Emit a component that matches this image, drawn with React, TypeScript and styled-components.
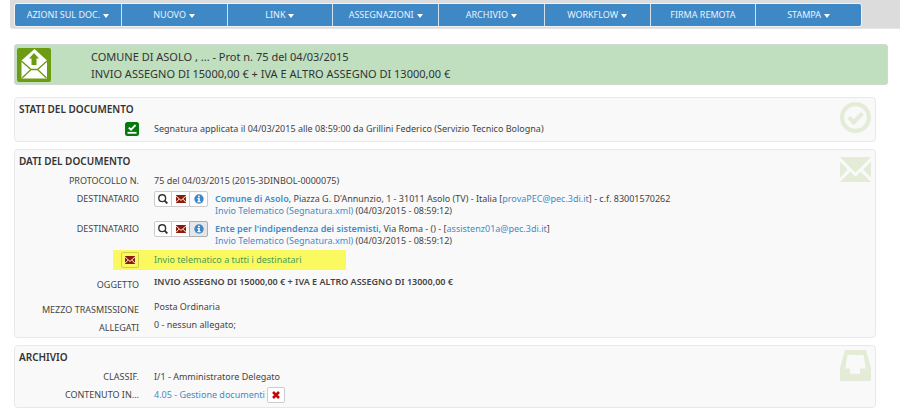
import React from "react";
import styled, { createGlobalStyle, css } from "styled-components";

const Global = createGlobalStyle`
  *, *::before, *::after { box-sizing: border-box; }
  body {
    margin: 0;
    background: #fff;
    color: #444;
    font: 9px/12px "Noto Sans", "Open Sans", sans-serif;
  }
`;

const Toolbar = styled.header`
  margin-left: 10px;
  padding: 3px 38px 1px 4px;
  background: #dcdcdc;
  border-bottom: 1px solid #e6e6e6;
  border-bottom-left-radius: 3px;
`;

const Menu = styled.nav`
  display: grid;
  grid-template-columns: repeat(8, 1fr);
  border: 1px solid #f0f1f2;
  border-radius: 3px;
  overflow: hidden;
`;

const MenuButton = styled.button`
  display: flex;
  align-items: center;
  justify-content: center;
  gap: 3px;
  height: 22px;
  padding: 0;
  border: 0;
  background: #3f88c6;
  color: #eaf3fb;
  font: inherit;
  cursor: pointer;

  & + & {
    border-left: 1px solid #d5e2ee;
  }
`;

const Caret = styled.span`
  margin-top: 2px;
  border: 3px solid transparent;
  border-top: 4px solid #fff;
  border-bottom: 0;
`;

const Banner = styled.section`
  display: flex;
  align-items: center;
  gap: 40px;
  margin: 15px 12px 12px 14px;
  padding: 3px 2px 2px;
  border: 1px solid #d0d8cf;
  border-radius: 3px;
  background: #bfdfbf;
`;

const BannerTitle = styled.h1`
  margin: 0;
  color: #333;
  font-size: 11px;
  line-height: 17px;
  font-weight: 400;
`;

const Panels = styled.main`
  display: flex;
  flex-direction: column;
  gap: 7px;
  margin: 0 24px 6px 14px;
`;

const Panel = styled.section`
  position: relative;
  padding: 3px 4px;
  border: 1px solid #e8e8e8;
  border-radius: 4px;
  background: #f9f9f9;
`;

const PanelTitle = styled.h2`
  margin: 0 0 2px;
  color: #333;
  font-size: 10px;
  line-height: 17px;
  font-weight: 600;
`;

const Watermark = styled.div`
  position: absolute;
  top: 4px;
  right: 4px;
  width: 31px;
  height: 31px;
  color: #e4ecd8;

  svg { display: block; width: 100%; height: 100%; }
`;

const Row = styled.div<{ $space?: number }>`
  display: grid;
  grid-template-columns: 120px 1fr;
  gap: 15px;
  min-height: 18px;
  margin-top: ${(p) => p.$space ?? 0}px;
`;

const Label = styled.div<{ $low?: boolean }>`
  padding-top: ${(p) => (p.$low ? 6 : 3)}px;
  text-align: right;
  white-space: nowrap;
`;

const Value = styled.div<{ $strong?: boolean }>`
  padding-top: 3px;
  font-weight: ${(p) => (p.$strong ? 600 : 400)};
`;

const Recipient = styled.div`
  display: flex;
  gap: 7px;
  min-height: 30px;
`;

const Lines = styled.div`
  padding-top: 3px;
`;

const Link = styled.a<{ $strong?: boolean }>`
  color: #428bca;
  font-weight: ${(p) => (p.$strong ? 600 : 400)};
  text-decoration: none;
`;

const Group = styled.div`
  display: flex;
  align-self: flex-start;
  margin-top: 1px;
`;

const IconButton = styled.button<{ $tone?: "pressed" | "marked" }>`
  display: flex;
  align-items: center;
  justify-content: center;
  width: 18px;
  height: 16px;
  padding: 0;
  border: 1px solid #ccc;
  border-radius: 2px;
  background: #fff;
  color: #333;
  cursor: pointer;

  ${(p) => p.$tone === "pressed" && css`background: #e6e6e6; border-color: #adadad;`}
  ${(p) => p.$tone === "marked" && css`background: #fafa5c; border-color: #cfcf4c;`}

  ${Group} &:not(:first-child) { margin-left: -1px; border-top-left-radius: 0; border-bottom-left-radius: 0; width: 19px; }
  ${Group} &:not(:last-child) { border-top-right-radius: 0; border-bottom-right-radius: 0; }
`;

const Highlight = styled.div`
  display: flex;
  align-items: center;
  gap: 15px;
  width: fit-content;
  margin-left: 94px;
  padding: 2px 44px 2px 8px;
  background: #fafa60;

  a { color: #4c9a52; }
`;

const Inline = styled.div`
  display: flex;
  align-items: center;
  gap: 2px;
`;

const StatusMark = styled.div`
  display: flex;
  justify-content: flex-end;
  align-items: flex-start;
  padding-top: 2px;
`;

function OutgoingIcon() {
  return (
    <svg width="34" height="34" viewBox="0 0 34 34" aria-hidden="true">
      <rect width="34" height="34" rx="2" fill="#6b9c12" />
      <path d="M4.5 12.5 17.5 1 30 12.5V30.5H4.5Z" fill="#fff" />
      <path d="M4.5 13 14 21.5H20.5L30 13M5 30 14 21.5M29.5 30 20.5 21.5" fill="none" stroke="#6b9c12" strokeWidth="1.3" />
      <path d="M17 5 22 10.5H19.5V17H14.5V10.5H12Z" fill="#6b9c12" />
    </svg>
  );
}

function SignedIcon() {
  return (
    <svg width="14" height="14" viewBox="0 0 14 14" role="img" aria-label="Segnatura applicata">
      <rect width="14" height="14" rx="2.5" fill="#047a0c" />
      <path d="M3.8 5.6 6 7.7 10.6 3" fill="none" stroke="#fff" strokeWidth="1.8" />
      <path d="M2.5 10.8H11.5" stroke="#fff" strokeWidth="1.8" />
    </svg>
  );
}

function SearchIcon() {
  return (
    <svg width="10" height="10" viewBox="0 0 10 10" aria-hidden="true">
      <circle cx="4.2" cy="4.2" r="3.4" fill="none" stroke="#333" strokeWidth="1.4" />
      <path d="M6.6 6.6 9.4 9.4" stroke="#333" strokeWidth="1.9" />
    </svg>
  );
}

function MailIcon() {
  return (
    <svg width="10" height="8" viewBox="0 0 31 25" aria-hidden="true">
      <rect width="31" height="25" fill="#8c1c08" />
      <path d="M0 3 15.5 17 31 3M0 23 9 13M31 23 22 13" fill="none" stroke="#fff" strokeWidth="3" />
    </svg>
  );
}

function InfoIcon() {
  return (
    <svg width="10" height="10" viewBox="0 0 10 10" aria-hidden="true">
      <circle cx="5" cy="5" r="4.7" fill="#3f88c6" />
      <path d="M4 1.8H5.8V3.2H4ZM3.4 4H5.8V7H6.6V8.2H3.4V7H4.2V5H3.4Z" fill="#fff" />
    </svg>
  );
}

function RemoveIcon() {
  return (
    <svg width="8" height="8" viewBox="0 0 8 8" aria-hidden="true">
      <path d="M1 1 7 7M7 1 1 7" stroke="#c4060c" strokeWidth="2.6" />
    </svg>
  );
}

function CheckMark() {
  return (
    <svg viewBox="0 0 31 31" aria-hidden="true">
      <circle cx="15.5" cy="15.5" r="13.4" fill="none" stroke="currentColor" strokeWidth="4.2" />
      <path d="M8.8 15.2 13.8 20.2 22.4 11.4" fill="none" stroke="currentColor" strokeWidth="4.2" />
    </svg>
  );
}

function MailMark() {
  return (
    <svg viewBox="0 0 31 31" aria-hidden="true">
      <path d="M0 3H31L15.5 18.5ZM0 7.8 7.8 15.5 0 23.5ZM31 7.8 23.2 15.5 31 23.5ZM0 28 10.3 17.8 15.5 22.8 20.7 17.8 31 28Z" fill="currentColor" />
    </svg>
  );
}

function TrayMark() {
  return (
    <svg viewBox="0 0 31 31" aria-hidden="true">
      <path fillRule="evenodd" d="M5 0H26L31 18V31H0V18ZM7.5 5 5.2 18.5H10V23.8H20V18.5H25.8L23.5 5Z" fill="currentColor" />
    </svg>
  );
}

const MENU = [
  { text: "AZIONI SUL DOC.", opens: true },
  { text: "NUOVO", opens: true },
  { text: "LINK", opens: true },
  { text: "ASSEGNAZIONI", opens: true },
  { text: "ARCHIVIO", opens: true },
  { text: "WORKFLOW", opens: true },
  { text: "FIRMA REMOTA", opens: false },
  { text: "STAMPA", opens: true },
];

const RECIPIENTS = [
  { name: "Comune di Asolo", address: "Piazza G. D'Annunzio, 1 - 31011 Asolo (TV) - Italia", mail: "provaPEC@pec.3di.it", tail: " - c.f. 83001570262", open: false },
  { name: "Ente per l'indipendenza dei sistemisti", address: "Via Roma - () -", mail: "assistenz01a@pec.3di.it", tail: "", open: true },
];

export default function App() {
  return (
    <>
      <Global />
      <Toolbar>
        <Menu>
          {MENU.map((m) => (
            <MenuButton key={m.text} type="button" aria-haspopup={m.opens ? "menu" : undefined}>
              {m.text}
              {m.opens && <Caret />}
            </MenuButton>
          ))}
        </Menu>
      </Toolbar>

      <Banner>
        <OutgoingIcon />
        <BannerTitle>
          COMUNE DI ASOLO , ... - Prot n. 75 del 04/03/2015
          <br />
          INVIO ASSEGNO DI 15000,00 € + IVA E ALTRO ASSEGNO DI 13000,00 €
        </BannerTitle>
      </Banner>

      <Panels>
        <Panel>
          <PanelTitle>STATI DEL DOCUMENTO</PanelTitle>
          <Row>
            <StatusMark><SignedIcon /></StatusMark>
            <Value>Segnatura applicata il 04/03/2015 alle 08:59:00 da Grillini Federico (Servizio Tecnico Bologna)</Value>
          </Row>
          <Watermark><CheckMark /></Watermark>
        </Panel>

        <Panel>
          <PanelTitle>DATI DEL DOCUMENTO</PanelTitle>
          <Row>
            <Label>PROTOCOLLO N.</Label>
            <Value>75 del 04/03/2015 (2015-3DINBOL-0000075)</Value>
          </Row>
          {RECIPIENTS.map((r) => (
            <Row key={r.name}>
              <Label>DESTINATARIO</Label>
              <Recipient>
                <Group>
                  <IconButton type="button" aria-label="Cerca"><SearchIcon /></IconButton>
                  <IconButton type="button" aria-label="Invia"><MailIcon /></IconButton>
                  <IconButton type="button" aria-label="Informazioni" $tone={r.open ? "pressed" : undefined}><InfoIcon /></IconButton>
                </Group>
                <Lines>
                  <Link href="#" $strong>{r.name}</Link>, {r.address} [<Link href={"mailto:" + r.mail}>{r.mail}</Link>]{r.tail}
                  <br />
                  <Link href="#">Invio Telematico (Segnatura.xml)</Link> (04/03/2015 - 08:59:12)
                </Lines>
              </Recipient>
            </Row>
          ))}
          <Highlight>
            <IconButton type="button" aria-label="Invia a tutti" $tone="marked"><MailIcon /></IconButton>
            <Link href="#">Invio telematico a tutti i destinatari</Link>
          </Highlight>
          <Row $space={3}>
            <Label $low>OGGETTO</Label>
            <Value $strong>INVIO ASSEGNO DI 15000,00 € + IVA E ALTRO ASSEGNO DI 13000,00 €</Value>
          </Row>
          <Row $space={7}>
            <Label $low>MEZZO TRASMISSIONE</Label>
            <Value>Posta Ordinaria</Value>
          </Row>
          <Row>
            <Label $low>ALLEGATI</Label>
            <Value>0 - nessun allegato;</Value>
          </Row>
          <Watermark><MailMark /></Watermark>
        </Panel>

        <Panel>
          <PanelTitle>ARCHIVIO</PanelTitle>
          <Row>
            <Label>CLASSIF.</Label>
            <Value>I/1 - Amministratore Delegato</Value>
          </Row>
          <Row>
            <Label>CONTENUTO IN...</Label>
            <Inline>
              <Link href="#">4.05 - Gestione documenti</Link>
              <IconButton type="button" aria-label="Rimuovi"><RemoveIcon /></IconButton>
            </Inline>
          </Row>
          <Watermark><TrayMark /></Watermark>
        </Panel>
      </Panels>
    </>
  );
}
